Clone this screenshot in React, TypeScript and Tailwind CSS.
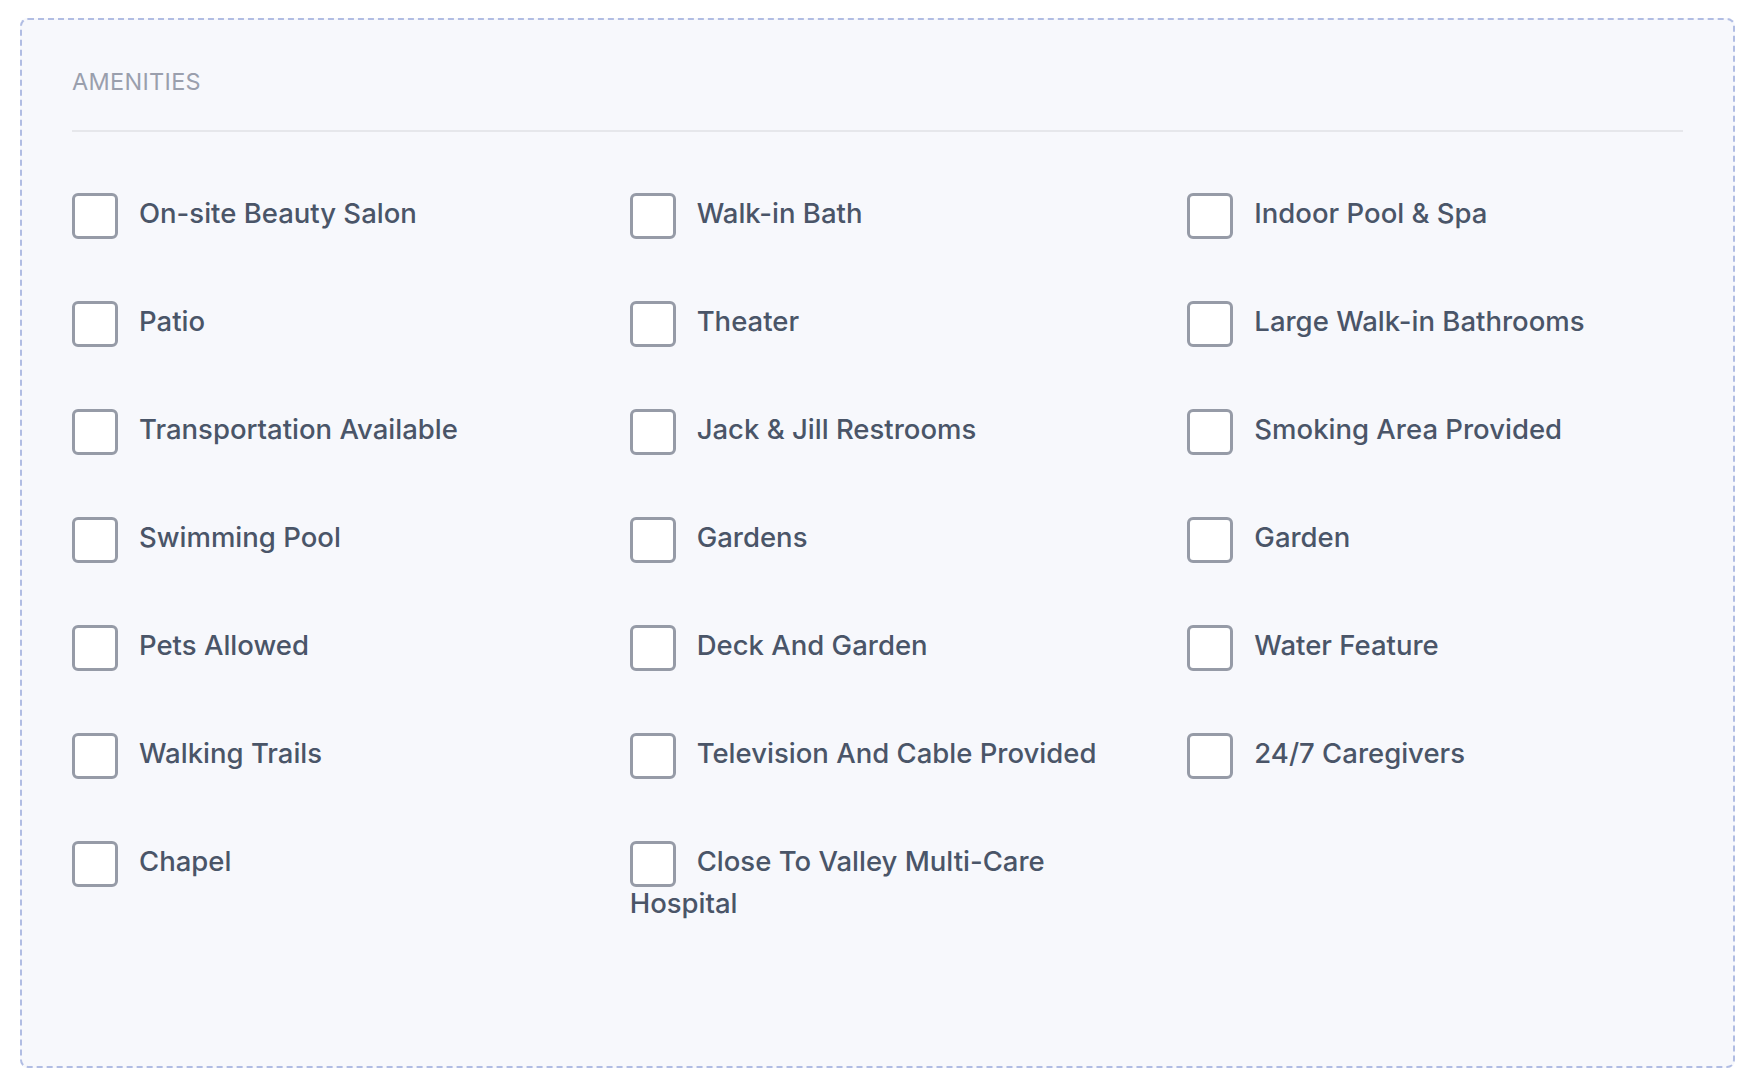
const amenities = [
  'On-site Beauty Salon',
  'Walk-in Bath',
  'Indoor Pool & Spa',
  'Patio',
  'Theater',
  'Large Walk-in Bathrooms',
  'Transportation Available',
  'Jack & Jill Restrooms',
  'Smoking Area Provided',
  'Swimming Pool',
  'Gardens',
  'Garden',
  'Pets Allowed',
  'Deck And Garden',
  'Water Feature',
  'Walking Trails',
  'Television And Cable Provided',
  '24/7 Caregivers',
  'Chapel',
  'Close To Valley Multi-Care Hospital',
]

function AmenityCheckbox({ label }: { label: string }) {
  return (
    <label className="block text-[27.5px] leading-[42px] font-[450] text-[#4a5568] cursor-pointer">
      <input type="checkbox" className="sr-only" />
      <span className="inline-block align-middle w-[46px] h-[46px] -my-[7px] mr-[21px] rounded-[6px] border-[3px] border-[#969ba7] bg-white" />
      {label}
    </label>
  )
}

export default function App() {
  return (
    <div
      className="min-h-screen bg-white pt-[18px] pl-5"
      style={{ fontFamily: 'Inter, "Noto Sans", "Liberation Sans", sans-serif' }}
    >
      <section className="w-[1715px] rounded-[8px] border-2 border-dashed border-[#b1bde3] bg-[#f7f8fc] px-[50px] pt-[46px] pb-[142px]">
        <h2 className="text-[23.5px] leading-[32px] text-[#9a9fad] tracking-[0.3px]">AMENITIES</h2>
        <div className="mt-[32px] h-[2px] bg-[#e6e7eb]" />
        <div className="mt-[60px] grid grid-cols-3 gap-x-[62px] gap-y-[66px]">
          {amenities.map((a) => (
            <AmenityCheckbox key={a} label={a} />
          ))}
        </div>
      </section>
    </div>
  )
}
